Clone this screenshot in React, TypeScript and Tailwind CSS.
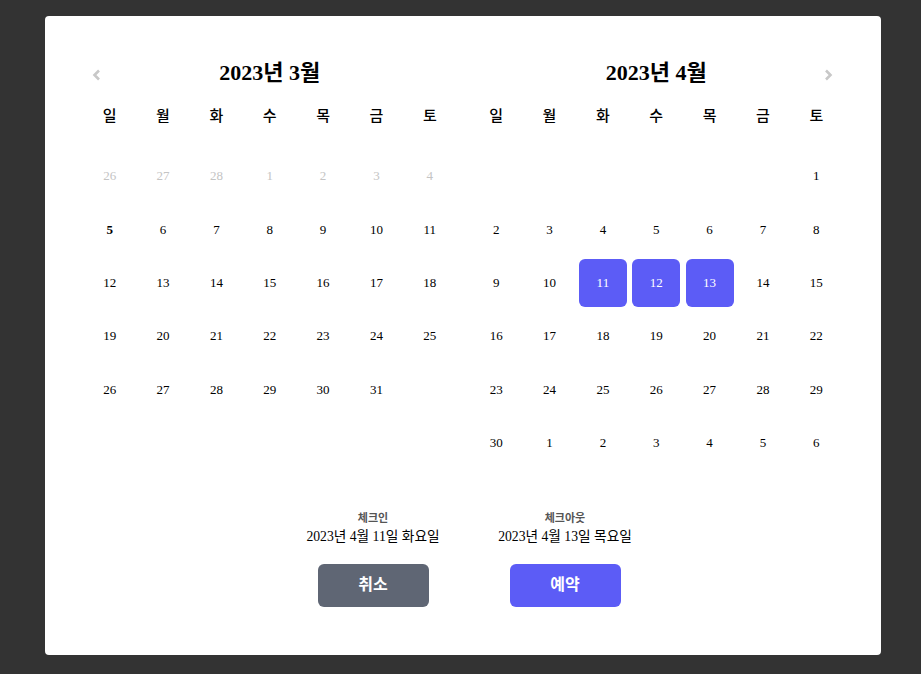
import React from "react";

const FONT = { fontFamily: '"Liberation Serif", "Noto Sans CJK KR", serif' };
const WEEK = ["일", "월", "화", "수", "목", "금", "토"];

type Day = { n: number | null; muted?: boolean; bold?: boolean; selected?: boolean };

const march: Day[] = [
  ...[26, 27, 28, 1, 2, 3, 4].map((n) => ({ n, muted: true })),
  { n: 5, bold: true },
  ...Array.from({ length: 26 }, (_, i) => ({ n: i + 6 })),
];

const april: Day[] = [
  ...Array.from({ length: 6 }, () => ({ n: null })),
  ...Array.from({ length: 30 }, (_, i) => ({ n: i + 1, selected: i >= 10 && i <= 12 })),
  ...[1, 2, 3, 4, 5, 6].map((n) => ({ n })),
];

const Chevron = ({ dir }: { dir: "left" | "right" }) => (
  <svg width="10" height="12" viewBox="0 0 10 12" fill="none">
    <path
      d={dir === "left" ? "M7 1.5 L2.5 6 L7 10.5" : "M3 1.5 L7.5 6 L3 10.5"}
      stroke="#c8c8c8"
      strokeWidth="2.6"
    />
  </svg>
);

const Month = ({ title, days, nav }: { title: string; days: Day[]; nav: "left" | "right" }) => (
  <div>
    <div className="relative flex h-8 items-center justify-center">
      <h2 className="text-[22px] font-bold text-black">{title}</h2>
      <button
        className={`absolute top-[13px] ${nav === "left" ? "left-[9px]" : "right-[10px]"}`}
      >
        <Chevron dir={nav} />
      </button>
    </div>
    <div className="mt-4 grid h-6 grid-cols-7 items-center">
      {WEEK.map((w) => (
        <div key={w} className="text-center text-[15px] font-medium text-black">
          {w}
        </div>
      ))}
    </div>
    <div className="mt-[21.5px] grid grid-cols-7">
      {days.map((d, i) => (
        <div key={i} className="flex h-[53.33px] items-center justify-center">
          {d.n !== null && (
            <div
              className={`flex h-[48px] w-[48px] items-center justify-center rounded-md text-[13px] ${
                d.selected
                  ? "bg-[#5c5cf6] text-white"
                  : d.muted
                  ? "text-[#c4c4c4]"
                  : "text-black"
              } ${d.bold ? "font-bold" : ""}`}
            >
              {d.n}
            </div>
          )}
        </div>
      ))}
    </div>
  </div>
);

export default function App() {
  return (
    <div className="min-h-[674px] bg-[#333333] pl-[45px] pr-[40px] pt-4" style={FONT}>
      <div className="rounded-[4px] bg-white px-[38px] pb-[48px] pt-[40px]">
        <div className="grid grid-cols-2 gap-[13px]">
          <Month title="2023년 3월" days={march} nav="left" />
          <Month title="2023년 4월" days={april} nav="right" />
        </div>
        <div className="mt-[40.5px] flex justify-center gap-[42px] pl-3">
          {[
            { label: "체크인", date: "2023년 4월 11일 화요일", btn: "취소", cls: "bg-[#5f6674]" },
            { label: "체크아웃", date: "2023년 4월 13일 목요일", btn: "예약", cls: "bg-[#5c5cf6]" },
          ].map((c) => (
            <div key={c.label} className="flex w-[150px] flex-col items-center">
              <div className="h-4 text-[11px] font-semibold leading-4 text-[#555]">{c.label}</div>
              <div className="mt-px h-5 whitespace-nowrap text-[13.7px] leading-5 text-black">{c.date}</div>
              <button
                className={`mt-[17px] h-[43px] w-[111px] rounded-md text-[16px] font-bold text-white ${c.cls}`}
              >
                {c.btn}
              </button>
            </div>
          ))}
        </div>
      </div>
    </div>
  );
}
